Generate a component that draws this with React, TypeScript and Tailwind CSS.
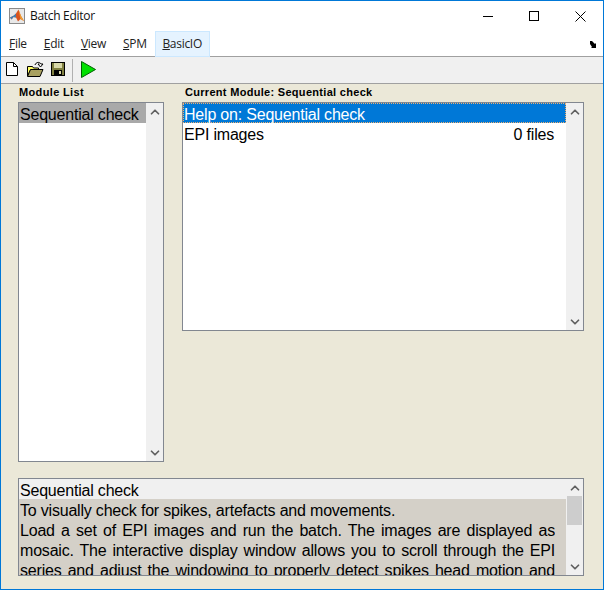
import { ChevronDown, ChevronUp } from 'lucide-react'

const MENUS = ['File', 'Edit', 'View', 'SPM']

function MatlabLogo() {
  return (
    <svg width="16" height="16" viewBox="0 0 16 16">
      <rect x="0.5" y="0.5" width="15" height="15" fill="#e8e8e8" stroke="#8a8a8a" />
      <path d="M1 9.5 5 7.5 7 5.5 9.5 1.5 12 8 15 13 11.5 11 9 13.5 7 9.5 4.5 9 2.5 11.5z" fill="#d9531e" />
      <path d="M1 9.5 5 7.5 7 5.5 7 9.5 4.5 9 2.5 11.5z" fill="#3f7fb5" />
      <path d="M9.5 1.5 12 8 15 13 11.5 11z" fill="#f0a030" />
    </svg>
  )
}

function NewIcon() {
  return (
    <svg width="12" height="14" viewBox="0 0 12 14">
      <path d="M0.5 0.5h7l4 4v9h-11z" fill="#fff" stroke="#000" />
      <path d="M7.5 0.5v4h4" fill="none" stroke="#000" />
    </svg>
  )
}

function OpenIcon() {
  return (
    <svg width="17" height="16" viewBox="0 0 17 16">
      <path d="M0.5 5.5h5l1 1.5h5v2h-8l-3 6z" fill="#ffff66" stroke="#000" />
      <path d="M0.5 15.5l3-7h12.5l-3 7z" fill="#a8a060" stroke="#000" />
      <path d="M8 4C9 1 12.5 0.5 14 3l2 0-2.5 3-2.5-3 1.5 0" fill="none" stroke="#000" />
    </svg>
  )
}

function SaveIcon() {
  return (
    <svg width="14" height="14" viewBox="0 0 14 14">
      <rect x="0.5" y="0.5" width="13" height="13" fill="#808040" stroke="#000" />
      <rect x="3" y="1" width="8" height="5" fill="#d8d8a8" />
      <rect x="3" y="8" width="8" height="5" fill="#000" />
      <rect x="8" y="9" width="2" height="3" fill="#d8d8a8" />
    </svg>
  )
}

function RunIcon() {
  return (
    <svg width="15" height="17" viewBox="0 0 15 17">
      <path d="M0.5 0.5v16L14.5 8.5z" fill="#00e000" stroke="#006000" />
    </svg>
  )
}

function ScrollButtons({ thumb }: { thumb?: boolean }) {
  return (
    <div className="relative flex w-[17px] shrink-0 flex-col justify-between bg-[#f0f0f0] pb-px pt-[2px] text-[#606060]">
      <ChevronUp size={14} strokeWidth={3} className="mx-auto" />
      {thumb && <div className="absolute left-[1px] top-[17px] h-[29px] w-[15px] bg-[#cdcdcd]" />}
      <ChevronDown size={14} strokeWidth={3} className="mx-auto" />
    </div>
  )
}

function DescLine({ text, last }: { text: string; last?: boolean }) {
  return (
    <div
      className={
        last
          ? 'h-5 overflow-hidden whitespace-nowrap text-left'
          : 'h-5 overflow-hidden text-justify [text-align-last:justify]'
      }
    >
      {text}
    </div>
  )
}

export default function App() {
  return (
    <div className="flex h-[590px] w-[604px] flex-col overflow-hidden border border-[#0078d7] bg-white font-['Liberation_Sans',Arial,sans-serif] text-black">
      {/* Title bar */}
      <div className="flex h-[30px] shrink-0 items-center font-['Open_Sans',sans-serif] text-xs">
        <div className="ml-[8px] mr-[5px]">
          <MatlabLogo />
        </div>
        <span className="tracking-[-0.3px] text-[#111]">Batch Editor</span>
        <div className="ml-auto flex h-full items-center">
          <div className="flex h-full w-[46px] items-center justify-center">
            <div className="h-px w-[10px] bg-black" />
          </div>
          <div className="flex h-full w-[46px] items-center justify-center">
            <div className="h-[10px] w-[10px] border border-black" />
          </div>
          <div className="flex h-full w-[46px] items-center justify-center">
            <svg width="11" height="11" viewBox="0 0 11 11">
              <path d="M0.5 0.5l10 10M10.5 0.5l-10 10" stroke="#000" fill="none" />
            </svg>
          </div>
        </div>
      </div>

      {/* Menu bar */}
      <div className="relative flex h-[26px] shrink-0 items-stretch border-b border-[#a0a0a0] pl-[8px] font-['Open_Sans',sans-serif] text-xs tracking-[-0.3px] text-[#222]">
        <div className="flex items-center gap-[17px]">
          {MENUS.map((m) => (
            <span key={m}>
              <span className="underline">{m[0]}</span>
              {m.slice(1)}
            </span>
          ))}
        </div>
        <div className="mb-[-1px] ml-[8px] flex w-[55px] items-center justify-center border border-[#cce8ff] bg-[#e5f3ff]">
          <span>
            <span className="underline">B</span>asicIO
          </span>
        </div>
        <svg className="absolute right-[5px] top-[10px]" width="8" height="7" viewBox="0 0 8 7">
          <path d="M0 0l2 0 3 3 1-1v5H1l1-1-2-3z" fill="#000" />
        </svg>
      </div>

      {/* Toolbar */}
      <div className="flex h-[27px] shrink-0 items-center border-b border-[#a0a0a0] bg-[#f0f0f0] pl-[5px]">
        <div className="mb-[2px]">
          <NewIcon />
        </div>
        <div className="mb-[2px] ml-[9px]">
          <OpenIcon />
        </div>
        <div className="mb-[2px] ml-[7px]">
          <SaveIcon />
        </div>
        <div className="ml-[7px] h-[23px] w-px bg-[#b0b0b0]" />
        <div className="mb-[2px] ml-[8px]">
          <RunIcon />
        </div>
      </div>

      {/* Content */}
      <div className="flex min-h-0 flex-1 flex-col bg-[#ebe8d8] px-[17px] pt-[2px]">
        <div className="flex items-start gap-[18px]">
          <div className="flex w-[146px] flex-col">
            <div className="ml-px h-[16px] text-[11px] font-bold leading-[13px] tracking-[0.35px]">Module List</div>
            <div className="flex h-[360px] border border-[#828790] bg-white">
              <div className="min-w-0 flex-1 text-base leading-5 tracking-[-0.2px]">
                <div className="h-5 whitespace-nowrap bg-[#a9a9a9] pl-px leading-6">Sequential check</div>
              </div>
              <ScrollButtons />
            </div>
          </div>
          <div className="flex w-[402px] flex-col">
            <div className="ml-[3px] h-[16px] text-[11px] font-bold leading-[13px] tracking-[0.3px]">
              Current Module: Sequential check
            </div>
            <div className="flex h-[229px] border border-[#828790] bg-white">
              <div className="min-w-0 flex-1 text-base leading-5 tracking-[-0.2px]">
                <div className="h-5 border border-dotted border-[#f0b070] bg-[#0078d7] leading-[22px] text-white">
                  Help on: Sequential check
                </div>
                <div className="flex justify-between pl-px pr-[12px] leading-6">
                  <span>EPI images</span>
                  <span>0 files</span>
                </div>
              </div>
              <ScrollButtons />
            </div>
          </div>
        </div>

        {/* Help text */}
        <div className="mt-[16px] flex h-[98px] w-[566px] border border-[#828790] text-base leading-6 tracking-[-0.2px]">
          <div className="min-w-0 flex-1 overflow-hidden bg-[#d4d0c8]">
            <div className="h-5 bg-[#f0f0f0] pl-px">Sequential check</div>
            <div className="pl-px pr-[11px]">
              <DescLine last text="To visually check for spikes, artefacts and movements." />
              <DescLine text="Load a set of EPI images and run the batch. The images are displayed as" />
              <DescLine text="mosaic. The interactive display window allows you to scroll through the EPI" />
              <DescLine text="series and adjust the windowing to properly detect spikes head motion and" />
            </div>
          </div>
          <ScrollButtons thumb />
        </div>
      </div>
    </div>
  )
}
